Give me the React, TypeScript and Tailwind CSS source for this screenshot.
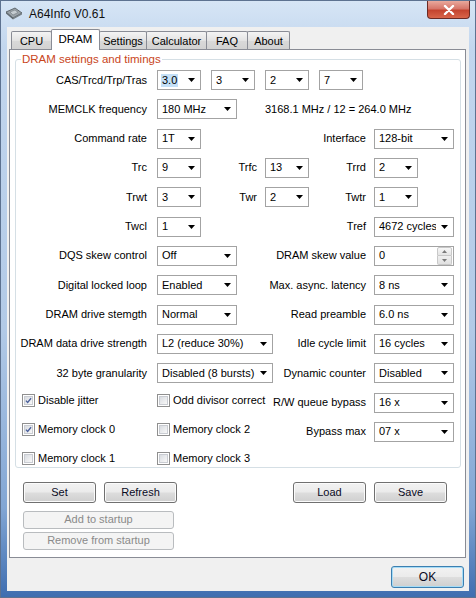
import React from "react";

// A64Info V0.61 – DRAM tab, Vista style window

function Arrow() {
  return (
    <svg width="7" height="4" viewBox="0 0 7 4">
      <path d="M0 0h7L3.5 4z" fill="#000" />
    </svg>
  );
}

function Combo({ value, w, ml = "", selected }: { value: string; w: string; ml?: string; selected?: boolean }) {
  return (
    <div className={`${w} ${ml} h-[20px] shrink-0 flex items-center border border-[#a3a3a3] bg-white`}>
      <div className="flex-1 pl-[3px] whitespace-nowrap overflow-hidden">
        {selected ? <span className="bg-[#c4e0f7] px-[1px] py-[1px]">{value}</span> : <span className="pl-[1px]">{value}</span>}
      </div>
      <div className="w-[17px] flex justify-center">
        <Arrow />
      </div>
    </div>
  );
}

function Spin({ value }: { value: string }) {
  return (
    <div className="w-[80px] ml-[8px] h-[20px] shrink-0 flex items-center border border-[#a3a3a3] bg-white">
      <div className="flex-1 pl-[4px]">{value}</div>
      <div className="w-[15px] h-[18px] mr-[1px] flex flex-col">
        <div className="flex-1 border border-[#c8c8c8] rounded-t-[2px] bg-[linear-gradient(180deg,#f7f7f7,#e4e4e4)] flex items-center justify-center">
          <svg width="5" height="3" viewBox="0 0 5 3"><path d="M0 3h5L2.5 0z" fill="#7a7a7a" /></svg>
        </div>
        <div className="flex-1 border border-t-0 border-[#c8c8c8] rounded-b-[2px] bg-[linear-gradient(180deg,#f0f0f0,#e0e0e0)] flex items-center justify-center">
          <svg width="5" height="3" viewBox="0 0 5 3"><path d="M0 0h5L2.5 3z" fill="#7a7a7a" /></svg>
        </div>
      </div>
    </div>
  );
}

function Label({ children }: { children: React.ReactNode }) {
  return <div className="w-[131px] shrink-0 text-right mr-[10px] whitespace-nowrap">{children}</div>;
}

function Mid({ children }: { children: React.ReactNode }) {
  return <div className="w-[64px] shrink-0 text-right pr-[8px]">{children}</div>;
}

function Right({ children }: { children: React.ReactNode }) {
  return <div className="flex-1 text-right whitespace-nowrap">{children}</div>;
}

function Check({ label, checked, w = "" }: { label: string; checked?: boolean; w?: string }) {
  return (
    <div className={`${w} shrink-0 flex items-center`}>
      <div className="w-[13px] h-[13px] border border-[#8f8f8f] bg-white p-[1px]">
        <div className="w-full h-full border border-[#c9ccd2] bg-[linear-gradient(135deg,#d9dce1,#f8f8f8)] flex items-center justify-center">
          {checked && (
            <svg width="9" height="9" viewBox="0 0 9 9">
              <path d="M1.2 4.6 L3.4 7 L7.8 1.6" fill="none" stroke="#4a5f9b" strokeWidth="1.7" />
            </svg>
          )}
        </div>
      </div>
      <span className="ml-[3px] whitespace-nowrap">{label}</span>
    </div>
  );
}

function Btn({ children, w, h = "h-[21px]", disabled, def }: { children: React.ReactNode; w: string; h?: string; disabled?: boolean; def?: boolean }) {
  if (disabled) {
    return (
      <div className={`${w} ${h} shrink-0 rounded-[3px] border border-[#b9bcbf] bg-[#f4f4f4] text-[#8a8a8a] flex items-center justify-center`}>
        {children}
      </div>
    );
  }
  return (
    <div
      className={`${w} ${h} shrink-0 rounded-[3px] border ${def ? "border-[#3c7fb1] shadow-[inset_0_0_0_1px_#a6dcf6]" : "border-[#707070] shadow-[inset_0_0_0_1px_#fbfbfb]"} bg-[linear-gradient(180deg,#f2f2f2_0%,#ebebeb_48%,#dddddd_52%,#cfcfcf_100%)] text-[#0a0a1e] flex items-center justify-center`}
    >
      {children}
    </div>
  );
}

function Tab({ label, w, selected }: { label: string; w: string; selected?: boolean }) {
  if (selected) {
    return (
      <div className={`${w} h-[21px] -mb-px -ml-px relative z-10 border border-b-0 border-[#898c95] rounded-t-[2px] bg-white flex items-start justify-center pt-[3px] text-[11.5px]`}>
        {label}
      </div>
    );
  }
  return (
    <div className={`${w} h-[18px] -ml-px border border-b-0 border-[#898c95] rounded-t-[2px] bg-[linear-gradient(180deg,#f4f4f4,#e3e3e3_50%,#d9d9d9_51%,#d2d2d2)] flex items-center justify-center pt-[1px]`}>
      {label}
    </div>
  );
}

export default function App() {
  return (
    <div className="w-[476px] h-[598px] overflow-hidden flex flex-col border border-[#5d7290] bg-[linear-gradient(180deg,#d6e5f5_0%,#c2d6ee_8%,#b2cae7_55%,#82a6d4_85%,#3f6eb0_100%)] font-['Liberation_Sans',Arial,sans-serif] text-[11px] leading-[13px] text-black">
      {/* title bar */}
      <div className="h-[26px] shrink-0 flex items-start">
        <div className="ml-[4px] mt-[6px] w-[18px] h-[13px]">
          <svg width="18" height="13" viewBox="0 0 18 13">
            <path d="M1 5 L10 1 L17 6 L8 11 Z" fill="#9aa2a8" stroke="#4b5358" strokeWidth="0.8" />
            <path d="M1 5 L8 11 L8 12.5 L1 6.5 Z" fill="#5c656b" />
            <path d="M8 11 L17 6 L17 7.5 L8 12.5 Z" fill="#767f85" />
            <path d="M5 5 L10 3 L13 5.5 L8 8 Z" fill="#c5ccd1" stroke="#6b7379" strokeWidth="0.5" />
          </svg>
        </div>
        <div className="ml-[6px] mt-[6px] text-[12px] leading-[15px] text-[#101010]">A64Info V0.61</div>
        <div className="flex-1" />
        <div className="mt-0 mr-[5px] w-[43px] h-[18px] rounded-b-[4px] border border-t-0 border-[#6b2a24] bg-[linear-gradient(180deg,#e9a99c_0%,#d6766a_45%,#c4442f_55%,#d8654a_100%)] flex items-center justify-center">
          <svg width="12" height="10" viewBox="0 0 12 10">
            <path d="M2 1 L10 9 M10 1 L2 9" stroke="#fff" strokeWidth="2.4" strokeLinecap="round" />
          </svg>
        </div>
      </div>

      {/* client area */}
      <div className="mx-[6px] h-[564px] shrink-0 bg-[#f0f0f0] flex flex-col">
        {/* tab strip */}
        <div className="h-[22px] shrink-0 flex items-end pl-[5px]">
          <Tab label="CPU" w="w-[41px]" />
          <Tab label="DRAM" w="w-[49px]" selected />
          <Tab label="Settings" w="w-[48px]" />
          <Tab label="Calculator" w="w-[61px]" />
          <Tab label="FAQ" w="w-[42px]" />
          <Tab label="About" w="w-[43px]" />
        </div>

        {/* tab page */}
        <div className="ml-[2px] mr-[3px] h-[509px] shrink-0 border border-[#898c95] bg-white flex flex-col">
          <fieldset className="ml-[5px] mr-[4px] mt-[3px] border border-[#d5dfe5] rounded-[3px] pb-[1px]">
            <legend className="ml-[5px] px-[1px] text-[#c9461c] text-[11.5px] leading-[13px]">DRAM settings and timings</legend>
            <div className="pt-[4px] pr-[6px] flex flex-col gap-y-[9.33px]">
              <div className="h-[20px] flex items-center">
                <Label>CAS/Trcd/Trp/Tras</Label>
                <Combo w="w-[44px]" value="3.0" selected />
                <Combo w="w-[44px]" ml="ml-[10px]" value="3" />
                <Combo w="w-[44px]" ml="ml-[10px]" value="2" />
                <Combo w="w-[44px]" ml="ml-[10px]" value="7" />
              </div>
              <div className="h-[20px] flex items-center">
                <Label>MEMCLK frequency</Label>
                <Combo w="w-[80px]" value="180 MHz" />
                <span className="ml-[28px]">3168.1 MHz / 12 = 264.0 MHz</span>
              </div>
              <div className="h-[20px] flex items-center">
                <Label>Command rate</Label>
                <Combo w="w-[44px]" value="1T" />
                <Right>Interface</Right>
                <Combo w="w-[80px]" ml="ml-[8px]" value="128-bit" />
              </div>
              <div className="h-[20px] flex items-center">
                <Label>Trc</Label>
                <Combo w="w-[44px]" value="9" />
                <Mid>Trfc</Mid>
                <Combo w="w-[44px]" value="13" />
                <Right>Trrd</Right>
                <Combo w="w-[44px]" ml="ml-[8px]" value="2" />
                <div className="w-[36px] shrink-0" />
              </div>
              <div className="h-[20px] flex items-center">
                <Label>Trwt</Label>
                <Combo w="w-[44px]" value="3" />
                <Mid>Twr</Mid>
                <Combo w="w-[44px]" value="2" />
                <Right>Twtr</Right>
                <Combo w="w-[44px]" ml="ml-[8px]" value="1" />
                <div className="w-[36px] shrink-0" />
              </div>
              <div className="h-[20px] flex items-center">
                <Label>Twcl</Label>
                <Combo w="w-[44px]" value="1" />
                <Right>Tref</Right>
                <Combo w="w-[80px]" ml="ml-[8px]" value="4672 cycles" />
              </div>
              <div className="h-[20px] flex items-center">
                <Label>DQS skew control</Label>
                <Combo w="w-[80px]" value="Off" />
                <Right>DRAM skew value</Right>
                <Spin value="0" />
              </div>
              <div className="h-[20px] flex items-center">
                <Label>Digital locked loop</Label>
                <Combo w="w-[80px]" value="Enabled" />
                <Right>Max. async. latency</Right>
                <Combo w="w-[80px]" ml="ml-[8px]" value="8 ns" />
              </div>
              <div className="h-[20px] flex items-center">
                <Label>DRAM drive stemgth</Label>
                <Combo w="w-[80px]" value="Normal" />
                <Right>Read preamble</Right>
                <Combo w="w-[80px]" ml="ml-[8px]" value="6.0 ns" />
              </div>
              <div className="h-[20px] flex items-center">
                <Label>DRAM data drive strength</Label>
                <Combo w="w-[116px]" value="L2 (reduce 30%)" />
                <Right>Idle cycle limit</Right>
                <Combo w="w-[80px]" ml="ml-[8px]" value="16 cycles" />
              </div>
              <div className="h-[20px] flex items-center">
                <Label>32 byte granularity</Label>
                <Combo w="w-[116px]" value="Disabled (8 bursts)" />
                <Right>Dynamic counter</Right>
                <Combo w="w-[80px]" ml="ml-[8px]" value="Disabled" />
              </div>
              <div className="h-[20px] flex items-center pl-[6px]">
                <div className="flex items-center mb-[4px]">
                  <Check w="w-[135px]" label="Disable jitter" checked />
                  <Check label="Odd divisor correct" />
                </div>
                <Right>R/W queue bypass</Right>
                <Combo w="w-[80px]" ml="ml-[8px]" value="16 x" />
              </div>
              <div className="h-[20px] flex items-center pl-[6px]">
                <div className="flex items-center mb-[4px]">
                  <Check w="w-[135px]" label="Memory clock 0" checked />
                  <Check label="Memory clock 2" />
                </div>
                <Right>Bypass max</Right>
                <Combo w="w-[80px]" ml="ml-[8px]" value="07 x" />
              </div>
            </div>
            <div className="h-[13px] mt-[10px] mb-[1px] flex items-center pl-[6px]">
              <Check w="w-[135px]" label="Memory clock 1" />
              <Check label="Memory clock 3" />
            </div>
          </fieldset>

          <div className="mt-[14px] ml-[13px] mr-[18px] flex">
            <Btn w="w-[73px]">Set</Btn>
            <Btn w="w-[73px] ml-[8px]">Refresh</Btn>
            <div className="flex-1" />
            <Btn w="w-[73px]">Load</Btn>
            <Btn w="w-[73px] ml-[8px]">Save</Btn>
          </div>
          <div className="mt-[8px] ml-[13px] flex flex-col gap-[3px]">
            <Btn w="w-[151px]" h="h-[18px]" disabled>Add to startup</Btn>
            <Btn w="w-[151px]" h="h-[18px]" disabled>Remove from startup</Btn>
          </div>
        </div>

        <div className="mt-[8px] mr-[5px] flex justify-end">
          <Btn w="w-[73px]" h="h-[22px]" def>
            <span className="text-[12px]">OK</span>
          </Btn>
        </div>
      </div>
    </div>
  );
}
